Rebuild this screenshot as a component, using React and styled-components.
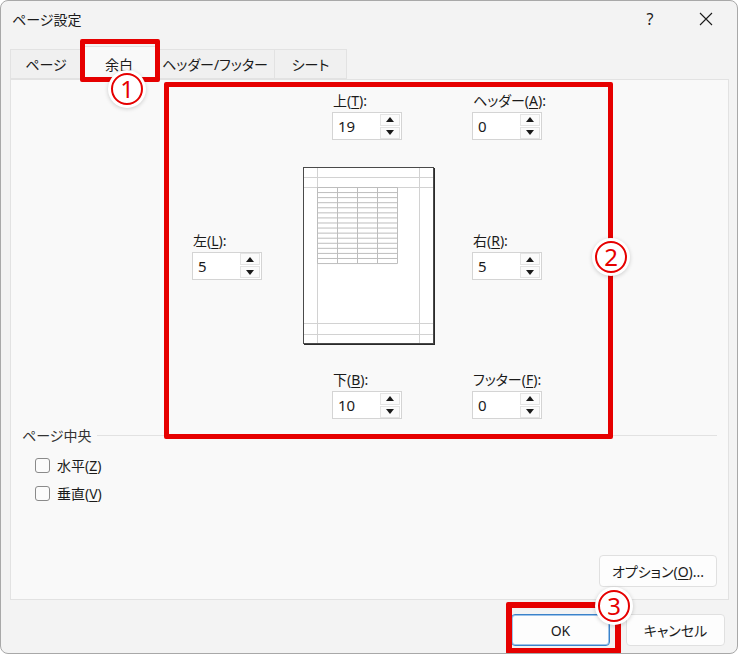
import React from 'react'
import styled, { createGlobalStyle } from 'styled-components';

const GlobalStyle = createGlobalStyle`
  html, body {
    margin: 0;
    padding: 0;
    background: #ffffff;
  }
  body {
    font-family: "Noto Sans", "Noto Sans CJK JP", sans-serif;
    font-size: 14px;
    color: #1b1b1b;
    font-feature-settings: "palt";
  }
`;

const RED = '#e60000';
const JP = '"Noto Sans", "Noto Sans CJK JP", sans-serif';

const Window = styled.div`
  position: relative;
  box-sizing: border-box;
  width: 738px;
  height: 654px;
  border: 1px solid #a8a8a8;
  border-radius: 8px;
  background: #f3f3f3;
  display: flex;
  flex-direction: column;
  overflow: hidden;
`;

const TitleBar = styled.div`
  height: 36px;
  display: flex;
  align-items: center;
  padding-left: 11px;
  font-family: ${JP};
  font-size: 14px;
`;

const Title = styled.div`
  flex: 1;
`;

const TitleButton = styled.div`
  width: 56px;
  height: 36px;
  display: flex;
  align-items: center;
  justify-content: center;
  font-family: "Noto Sans", sans-serif;
  font-size: 16px;
  margin-right: ${p => p.end ? 3 : 0}px;
`;

const TabStrip = styled.div`
  display: flex;
  align-items: flex-end;
  height: 42px;
  padding-left: 9px;
  box-sizing: border-box;
`;

const Tab = styled.div`
  box-sizing: border-box;
  width: ${p => p.w}px;
  height: ${p => (p.active ? 34 : 30)}px;
  margin-bottom: ${p => (p.active ? -1 : 0)}px;
  display: flex;
  align-items: center;
  justify-content: center;
  font-family: ${JP};
  font-size: 14px;
  background: ${p => (p.active ? '#f9f9f9' : '#f0f0f0')};
  border: 1px solid #e2e2e2;
  border-bottom: ${p => (p.active ? 'none' : '1px solid #e2e2e2')};
  border-left: ${p => (p.first || p.active ? '1px solid #e2e2e2' : 'none')};
  position: relative;
  z-index: ${p => (p.active ? 2 : 1)};
`;

const Panel = styled.div`
  position: relative;
  z-index: 1;
  box-sizing: border-box;
  margin: 0 8px 0 9px;
  height: 521px;
  background: #f9f9f9;
  border: 1px solid #e2e2e2;
  display: flex;
  flex-direction: column;
`;

const MarginGrid = styled.div`
  display: grid;
  grid-template-columns: 70px 131px 70px;
  column-gap: 40px;
  grid-template-rows: auto auto auto;
  margin: 11px 0 0 181px;
  width: 351px;
  font-family: ${JP};
`;

const Field = styled.div`
  grid-column: ${p => p.col};
  grid-row: ${p => p.row};
  align-self: center;
  display: flex;
  flex-direction: column;
  margin-left: ${p => p.shift || 0}px;
  width: 70px;
`;

const FieldLabel = styled.div`
  height: 20px;
  line-height: 20px;
  font-size: 14px;
  margin-bottom: 1px;
  padding-left: 1px;
  white-space: nowrap;
  u { text-underline-offset: 2px; }
`;

const SpinBox = styled.div`
  box-sizing: border-box;
  width: 70px;
  height: 28px;
  background: #ffffff;
  border: 1px solid #d4d4d4;
  display: flex;
  align-items: center;
`;

const SpinValue = styled.div`
  flex: 1;
  padding-left: 5px;
  font-family: "Noto Sans", sans-serif;
  font-size: 15px;
`;

const SpinButtons = styled.div`
  display: flex;
  flex-direction: column;
  gap: 1px;
  margin-right: 1px;
`;

const SpinButton = styled.div`
  box-sizing: border-box;
  width: 20px;
  height: 12px;
  background: #fbfbfb;
  border: 1px solid #e4e4e4;
  display: flex;
  align-items: center;
  justify-content: center;
`;

const Preview = styled.div`
  grid-column: 2;
  grid-row: 2;
  margin: 26px 0 24px 0;
  svg { display: block; }
`;

const GroupBox = styled.div`
  margin: 6px 11px 0 11px;
  font-family: ${JP};
`;

const GroupTitle = styled.div`
  display: flex;
  align-items: center;
  gap: 6px;
  color: #333;
  height: 20px;
  &::after {
    content: '';
    flex: 1;
    border-top: 1px solid #e2e2e2;
  }
`;

const CheckRow = styled.label`
  display: flex;
  align-items: center;
  gap: 7px;
  margin-left: 13px;
  height: 28px;
  u { text-underline-offset: 2px; }
`;

const CheckBox = styled.span`
  box-sizing: border-box;
  width: 15px;
  height: 15px;
  border: 1px solid #8a8a8a;
  border-radius: 3px;
  background: #fbfbfb;
`;

const Checks = styled.div`
  margin-top: 6px;
  display: flex;
  flex-direction: column;
`;

const OptionRow = styled.div`
  margin-top: auto;
  display: flex;
  justify-content: flex-end;
  padding: 0 11px 12px 0;
`;

const Button = styled.div`
  box-sizing: border-box;
  width: ${p => p.w}px;
  height: 32px;
  display: flex;
  align-items: center;
  justify-content: center;
  background: #fdfdfd;
  border: 1px solid ${p => (p.primary ? '#3b82c9' : '#e0e0e0')};
  box-shadow: ${p => (p.primary ? 'inset 0 0 0 1px #9cc3ea' : 'none')};
  border-radius: 4px;
  font-family: ${JP};
  font-size: 14px;
  u { text-underline-offset: 2px; }
`;

const Footer = styled.div`
  display: flex;
  justify-content: flex-end;
  gap: 16px;
  padding: 14px 12px 0 0;
`;

const RedBox = styled.div`
  position: absolute;
  box-sizing: border-box;
  left: ${p => p.x}px;
  top: ${p => p.y}px;
  width: ${p => p.w}px;
  height: ${p => p.h}px;
  border: ${p => p.t}px solid ${RED};
  border-radius: 2px;
  z-index: 5;
`;

const Badge = styled.div`
  position: absolute;
  left: ${p => p.x - 19}px;
  top: ${p => p.y - 19}px;
  width: 38px;
  height: 38px;
  border-radius: 50%;
  background: #ffffff;
  box-shadow: 0 1px 4px rgba(0, 0, 0, 0.18);
  display: flex;
  align-items: center;
  justify-content: center;
  z-index: 6;
`;

const BadgeRing = styled.div`
  box-sizing: border-box;
  width: 32px;
  height: 32px;
  border-radius: 50%;
  border: 2px solid ${RED};
  color: ${RED};
  display: flex;
  align-items: center;
  justify-content: center;
  font-family: "Noto Sans", sans-serif;
  font-size: 24px;
  line-height: 1;
  padding-bottom: 1px;
`;

const Arrow = ({ up }) => (
  <svg width="8" height="5" viewBox="0 0 8 5">
    <polygon points={up ? '0,5 8,5 4,0' : '0,0 8,0 4,5'} fill="#1a1a1a" />
  </svg>
);

const Spin = ({ label, value, shift, col, row }) => (
  <Field col={col} row={row} shift={shift}>
    <FieldLabel>{label}</FieldLabel>
    <SpinBox>
      <SpinValue>{value}</SpinValue>
      <SpinButtons>
        <SpinButton><Arrow up /></SpinButton>
        <SpinButton><Arrow /></SpinButton>
      </SpinButtons>
    </SpinBox>
  </Field>
);

const PageDrawing = () => {
  const rows = [];
  for (let i = 0; i <= 15; i++) {
    rows.push(<line key={'r' + i} x1="15" x2="95" y1={21 + i * 5.07} y2={21 + i * 5.07} stroke="#bdbdbd" strokeWidth="1" />);
  }
  const cols = [];
  for (let j = 0; j <= 4; j++) {
    cols.push(<line key={'c' + j} x1={15 + j * 20} x2={15 + j * 20} y1="21" y2="97" stroke="#bdbdbd" strokeWidth="1" />);
  }
  return (
    <svg width="133" height="180" viewBox="0 0 133 180">
      <rect x="1.5" y="1.5" width="130" height="176" fill="#ffffff" stroke="#4a4a4a" strokeWidth="1" />
      <line x1="2" y1="178.5" x2="132" y2="178.5" stroke="#2a2a2a" strokeWidth="1" />
      <line x1="132.5" y1="2" x2="132.5" y2="179" stroke="#2a2a2a" strokeWidth="1" />
      <line x1="15.5" y1="2" x2="15.5" y2="177" stroke="#d2d2d2" />
      <line x1="117.5" y1="2" x2="117.5" y2="177" stroke="#d2d2d2" />
      <line x1="2" y1="11.5" x2="131" y2="11.5" stroke="#d2d2d2" />
      <line x1="2" y1="21.5" x2="131" y2="21.5" stroke="#d2d2d2" />
      <line x1="2" y1="157.5" x2="131" y2="157.5" stroke="#d2d2d2" />
      <line x1="2" y1="168.5" x2="131" y2="168.5" stroke="#d2d2d2" />
      <g transform="translate(0.5 0.5)">
        {rows}
        {cols}
      </g>
    </svg>
  );
};

const CloseIcon = () => (
  <svg width="14" height="14" viewBox="0 0 14 14">
    <path d="M1 1 L13 13 M13 1 L1 13" stroke="#1b1b1b" strokeWidth="1.1" fill="none" />
  </svg>
);

const App = () => {
  return (
    <>
      <GlobalStyle />
      <Window>
        <TitleBar>
          <Title>ページ設定</Title>
          <TitleButton>?</TitleButton>
          <TitleButton end><CloseIcon /></TitleButton>
        </TitleBar>
        <TabStrip>
          <Tab w={72} first>ページ</Tab>
          <Tab w={74} active>余白</Tab>
          <Tab w={119}>ヘッダー/フッター</Tab>
          <Tab w={72}>シート</Tab>
        </TabStrip>
        <Panel>
          <MarginGrid>
            <Spin col={2} row={1} shift={30} label={<>上(<u>T</u>):</>} value="19" />
            <Spin col={3} row={1} shift={-1} label={<>ヘッダー(<u>A</u>):</>} value="0" />
            <Spin col={1} row={2} label={<>左(<u>L</u>):</>} value="5" />
            <Preview><PageDrawing /></Preview>
            <Spin col={3} row={2} shift={-1} label={<>右(<u>R</u>):</>} value="5" />
            <Spin col={2} row={3} shift={30} label={<>下(<u>B</u>):</>} value="10" />
            <Spin col={3} row={3} shift={-1} label={<>フッター(<u>F</u>):</>} value="0" />
          </MarginGrid>
          <GroupBox>
            <GroupTitle>ページ中央</GroupTitle>
            <Checks>
              <CheckRow><CheckBox /><span>水平(<u>Z</u>)</span></CheckRow>
              <CheckRow><CheckBox /><span>垂直(<u>V</u>)</span></CheckRow>
            </Checks>
          </GroupBox>
          <OptionRow>
            <Button w={118}>オプション(<u>O</u>)...</Button>
          </OptionRow>
        </Panel>
        <Footer>
          <Button w={99} primary>OK</Button>
          <Button w={99}>キャンセル</Button>
        </Footer>

        <RedBox x={79} y={38} w={80} h={43} t={5} />
        <RedBox x={163} y={81} w={449} h={357} t={5} />
        <RedBox x={505} y={601} w={115} h={52} t={6} />
        <Badge x={126} y={88}><BadgeRing>1</BadgeRing></Badge>
        <Badge x={610} y={256}><BadgeRing>2</BadgeRing></Badge>
        <Badge x={613} y={605}><BadgeRing>3</BadgeRing></Badge>
      </Window>
    </>
  )
}

export default App;
